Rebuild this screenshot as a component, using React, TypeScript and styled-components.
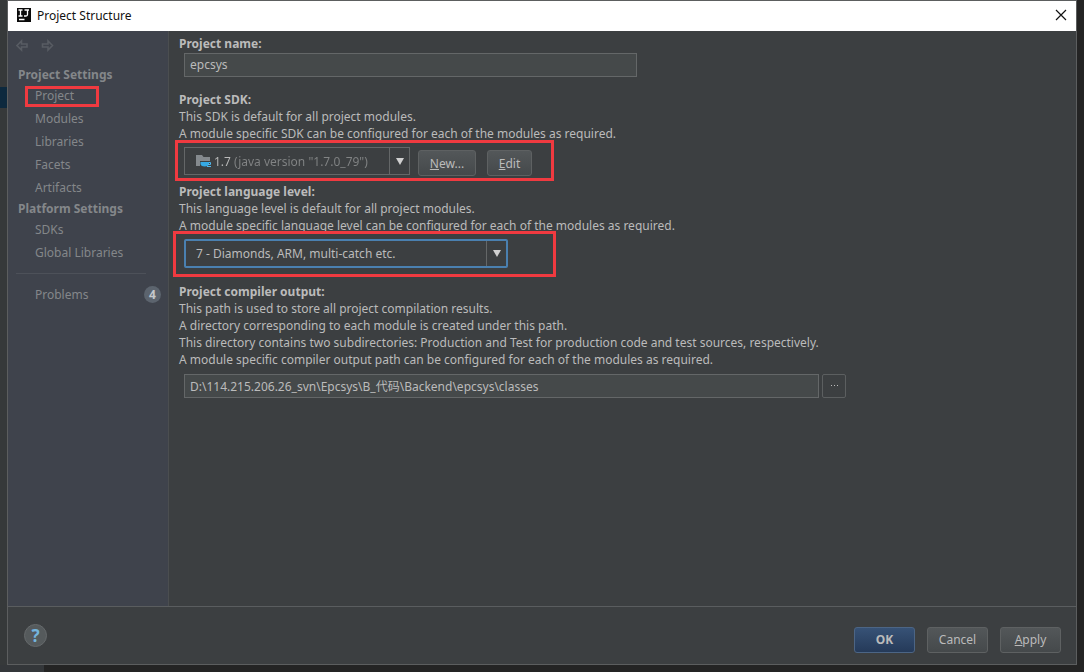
import React from "react";
import styled, { createGlobalStyle, css } from "styled-components";

const line = "#5a5d5f";
const text = "#bbbbbb";
const red = "#f03a40";

const GlobalStyle = createGlobalStyle`
  *, *::before, *::after { box-sizing: border-box; }
  body {
    margin: 0;
    background: #242424;
    color: ${text};
    font: 12px/17px "Noto Sans", "Noto Sans CJK SC", sans-serif;
  }
  button, input, select { font: inherit; color: inherit; }
`;

const Desktop = styled.div`
  min-height: 100vh;
  display: grid;
  grid-template-columns: 7px minmax(0, 1fr) 7px;
  grid-template-rows: minmax(0, 1fr) 7px;
`;

const EditorEdge = styled.div`
  grid-row: 1;
  padding-top: 87px;
  background: #36393a;
`;

const EditorSelection = styled.div`
  height: 21px;
  background: #0d293e;
`;

const StatusEdge = styled.div`
  grid-row: 2;
  grid-column: 1 / 3;
  width: 44px;
  background: #34373a;
`;

const Dialog = styled.section`
  grid-row: 1;
  grid-column: 2;
  display: flex;
  flex-direction: column;
  border: 1px solid #5c5e5f;
  background: #3c3f41;
`;

const TitleBar = styled.header`
  display: flex;
  align-items: center;
  gap: 6px;
  height: 30px;
  padding: 0 9px 2px;
  background: #ffffff;
  color: #111111;
`;

const Title = styled.h1`
  flex: 1;
  margin: 0;
  font-size: 12px;
  font-weight: 400;
`;

const IconButton = styled.button`
  display: flex;
  padding: 0;
  border: 0;
  background: none;
`;

const Body = styled.div`
  flex: 1;
  display: flex;
`;

const Sidebar = styled.nav`
  flex: none;
  width: 161px;
  padding: 8px 7px 0 8px;
  border-right: 1px solid #4b4e50;
  background: #3f434c;
  color: #84878a;
`;

const History = styled.div`
  display: flex;
  gap: 12px;
  height: 26px;
`;

const NavHeading = styled.h2`
  margin: 0;
  padding-left: 2px;
  font-size: 12px;
  line-height: 19px;
  font-weight: 700;
`;

const NavList = styled.ul`
  margin: 0;
  padding: 0;
  list-style: none;
`;

const NavItem = styled.li`
  position: relative;
  display: flex;
  align-items: center;
  justify-content: space-between;
  height: 23px;
  padding-left: 19px;
`;

const NavLink = styled.a`
  color: inherit;
  text-decoration: none;
`;

const Divider = styled.hr`
  width: 130px;
  margin: 9px 0;
  border: 0;
  border-top: 1px solid #4d5159;
`;

const Count = styled.span`
  width: 17px;
  height: 17px;
  border-radius: 50%;
  background: #5c646e;
  color: #c4c8cc;
  font-weight: 700;
  text-align: center;
`;

const Highlight = styled.span<{ $inset: string }>`
  position: absolute;
  inset: ${(p) => p.$inset};
  border: 3px solid ${red};
  pointer-events: none;
`;

const Content = styled.main`
  flex: 1;
  min-width: 0;
  padding: 4px 10px;
`;

const Group = styled.section<{ $gap: number }>`
  margin-bottom: ${(p) => p.$gap}px;
`;

const GroupLabel = styled.label`
  display: block;
  font-weight: 700;
`;

const Note = styled.p`
  margin: 0;
`;

const Controls = styled.div<{ $top: number; $width: number }>`
  position: relative;
  display: flex;
  width: ${(p) => p.$width}px;
  max-width: 100%;
  margin: ${(p) => p.$top}px 0 0 5px;
`;

const TextField = styled.input`
  flex: 1;
  min-width: 0;
  height: 24px;
  padding: 0 5px 1px;
  border: 1px solid #646768;
  border-radius: 0;
  background: #45494a;
`;

const Combo = styled.div<{ $focused?: boolean }>`
  position: relative;
  flex: 1;
  display: flex;
  height: 28px;
  border: 1px solid #646768;
  ${(p) =>
    p.$focused &&
    css`
      height: 29px;
      border: 2px solid #4a80b0;
      border-radius: 2px;
    `}
`;

const Select = styled.select<{ $withDetail?: boolean }>`
  flex: 1;
  min-width: 0;
  appearance: none;
  padding: 0 0 0 10px;
  border: 0;
  outline: 0;
  background: none;
  ${(p) =>
    p.$withDetail &&
    css`
      padding-left: 29px;
      color: transparent;
      background: linear-gradient(90deg, ${text} 48px, #828485 48px);
      background-clip: text;
      -webkit-background-clip: text;
    `}
`;

const FolderSlot = styled.span`
  position: absolute;
  left: 11px;
  top: 6px;
  display: flex;
  pointer-events: none;
`;

const Arrow = styled.span`
  display: flex;
  align-items: center;
  justify-content: center;
  width: 20px;
  border-left: 1px solid #646768;
  pointer-events: none;
`;

const Button = styled.button<{ $width: number; $primary?: boolean }>`
  width: ${(p) => p.$width}px;
  height: 26px;
  padding: 0;
  border: 1px solid #5e6162;
  border-radius: 3px;
  background: linear-gradient(#535759, #45494b);
  ${(p) =>
    p.$primary &&
    css`
      border-color: #4c6585;
      background: linear-gradient(#375276, #253a59);
      font-weight: 700;
    `}
`;

const SdkButtons = styled.div`
  display: flex;
  gap: 11px;
  margin: 3px 0 0 8px;
`;

const BrowseButton = styled.button`
  display: flex;
  align-items: center;
  justify-content: center;
  width: 24px;
  height: 24px;
  margin-left: 3px;
  padding: 0;
  border: 1px solid #5c5f60;
  border-radius: 2px;
  background: none;
`;

const Footer = styled.footer`
  display: flex;
  align-items: center;
  justify-content: space-between;
  height: 58px;
  padding: 8px 15px 0 16px;
  border-top: 1px solid ${line};
`;

const Actions = styled.div`
  display: flex;
  gap: 12px;
`;

const HelpButton = styled.button`
  width: 23px;
  height: 23px;
  margin-bottom: 8px;
  padding: 0;
  border: 1px solid #65696b;
  border-radius: 50%;
  background: #555a5c;
  color: #74b4dc;
  font-size: 17px;
  line-height: 20px;
  font-weight: 700;
`;

const LogoIcon = () => (
  <svg width="14" height="14" viewBox="0 0 14 14" aria-hidden="true">
    <rect width="14" height="14" fill="#0a0a0a" />
    <path
      d="M1.500 2h4M3.500 2v6M1.500 8h4M7.500 2H12M10.500 2v4.500q0 1.500-1.500 1.500H7M2 11.500h5.500"
      fill="none"
      stroke="#fff"
      strokeWidth="1.300"
    />
  </svg>
);

const CloseIcon = () => (
  <svg width="12" height="12" viewBox="0 0 12 12" aria-hidden="true">
    <path d="M1 1l10 10M11 1L1 11" stroke="#111" strokeWidth="1.200" />
  </svg>
);

const HistoryIcon = ({ forward }: { forward?: boolean }) => (
  <svg width="13" height="13" viewBox="0 0 13 13" aria-hidden="true">
    <path
      d={forward ? "M11.500 6.500L7 2v3H1.500v3H7v3z" : "M1 6.500L5.500 2v3H11v3H5.500v3z"}
      fill="none"
      stroke="#585c63"
      strokeWidth="1.600"
    />
  </svg>
);

const SdkFolderIcon = () => (
  <svg width="16" height="14" viewBox="0 0 16 14" aria-hidden="true">
    <path d="M0 1h6l1.500 2H14v4H4v5H0z" fill="#858a8e" />
    <path d="M4.500 8h8.500v1.500q0 3-4.250 3T4.500 9.500z" fill="#35a9e5" />
    <path d="M13 8.500h1.500v2H12M11 12.500h4" fill="none" stroke="#4fb9ee" />
  </svg>
);

const DownIcon = () => (
  <svg width="8" height="7" viewBox="0 0 8 7" aria-hidden="true">
    <path d="M0 0h8L4 7z" fill="#d0d0d0" />
  </svg>
);

const DotsIcon = () => (
  <svg width="9" height="2" viewBox="0 0 9 2" aria-hidden="true">
    <path d="M1 0h1v1H1zM4 0h1v1H4zM7 0h1v1H7z" fill="#bbb" />
  </svg>
);

const projectPages = ["Project", "Modules", "Libraries", "Facets", "Artifacts"];
const platformPages = ["SDKs", "Global Libraries"];

const Pages = ({ names, marked }: { names: string[]; marked?: string }) => (
  <NavList>
    {names.map((name) => (
      <NavItem key={name}>
        <NavLink href="#">{name}</NavLink>
        {name === marked && <Highlight $inset="2px 62px 0 9px" />}
      </NavItem>
    ))}
  </NavList>
);

export default function App() {
  return (
    <>
      <GlobalStyle />
      <Desktop>
        <EditorEdge>
          <EditorSelection />
        </EditorEdge>
        <Dialog aria-label="Project Structure">
          <TitleBar>
            <LogoIcon />
            <Title>Project Structure</Title>
            <IconButton aria-label="Close">
              <CloseIcon />
            </IconButton>
          </TitleBar>
          <Body>
            <Sidebar>
              <History>
                <IconButton aria-label="Back">
                  <HistoryIcon />
                </IconButton>
                <IconButton aria-label="Forward">
                  <HistoryIcon forward />
                </IconButton>
              </History>
              <NavHeading>Project Settings</NavHeading>
              <Pages names={projectPages} marked="Project" />
              <NavHeading>Platform Settings</NavHeading>
              <Pages names={platformPages} />
              <Divider />
              <NavList>
                <NavItem>
                  <NavLink href="#">Problems</NavLink>
                  <Count>4</Count>
                </NavItem>
              </NavList>
            </Sidebar>
            <Content>
              <Group $gap={14}>
                <GroupLabel htmlFor="name">Project name:</GroupLabel>
                <Controls $top={1} $width={453}>
                  <TextField id="name" defaultValue="epcsys" />
                </Controls>
              </Group>
              <Group $gap={7}>
                <GroupLabel htmlFor="sdk">Project SDK:</GroupLabel>
                <Note>This SDK is default for all project modules.</Note>
                <Note>A module specific SDK can be configured for each of the modules as required.</Note>
                <Controls $top={5} $width={348}>
                  <Combo>
                    <FolderSlot>
                      <SdkFolderIcon />
                    </FolderSlot>
                    <Select id="sdk" $withDetail>
                      <option>1.7 (java version "1.7.0_79")</option>
                    </Select>
                    <Arrow>
                      <DownIcon />
                    </Arrow>
                  </Combo>
                  <SdkButtons>
                    <Button $width={58}>
                      <u>N</u>ew...
                    </Button>
                    <Button $width={45}>
                      <u>E</u>dit
                    </Button>
                  </SdkButtons>
                  <Highlight $inset="-7px -22px -5px -9px" />
                </Controls>
              </Group>
              <Group $gap={15}>
                <GroupLabel htmlFor="level">Project language level:</GroupLabel>
                <Note>This language level is default for all project modules.</Note>
                <Note>
                  A module specific language level can be configured for each of the modules as required.
                </Note>
                <Controls $top={5} $width={324}>
                  <Combo $focused>
                    <Select id="level">
                      <option>7 - Diamonds, ARM, multi-catch etc.</option>
                    </Select>
                    <Arrow>
                      <DownIcon />
                    </Arrow>
                  </Combo>
                  <Highlight $inset="-8px -48px -9px -11px" />
                </Controls>
              </Group>
              <Group $gap={0}>
                <GroupLabel htmlFor="output">Project compiler output:</GroupLabel>
                <Note>This path is used to store all project compilation results.</Note>
                <Note>A directory corresponding to each module is created under this path.</Note>
                <Note>
                  This directory contains two subdirectories: Production and Test for production code and
                  test sources, respectively.
                </Note>
                <Note>
                  A module specific compiler output path can be configured for each of the modules as
                  required.
                </Note>
                <Controls $top={6} $width={662}>
                  <TextField
                    id="output"
                    defaultValue={"D:\\114.215.206.26_svn\\Epcsys\\B_代码\\Backend\\epcsys\\classes"}
                  />
                  <BrowseButton aria-label="Browse">
                    <DotsIcon />
                  </BrowseButton>
                </Controls>
              </Group>
            </Content>
          </Body>
          <Footer>
            <HelpButton aria-label="Help">?</HelpButton>
            <Actions>
              <Button $width={61} $primary>
                OK
              </Button>
              <Button $width={61}>Cancel</Button>
              <Button $width={61}>
                <u>A</u>pply
              </Button>
            </Actions>
          </Footer>
        </Dialog>
        <StatusEdge />
      </Desktop>
    </>
  );
}
